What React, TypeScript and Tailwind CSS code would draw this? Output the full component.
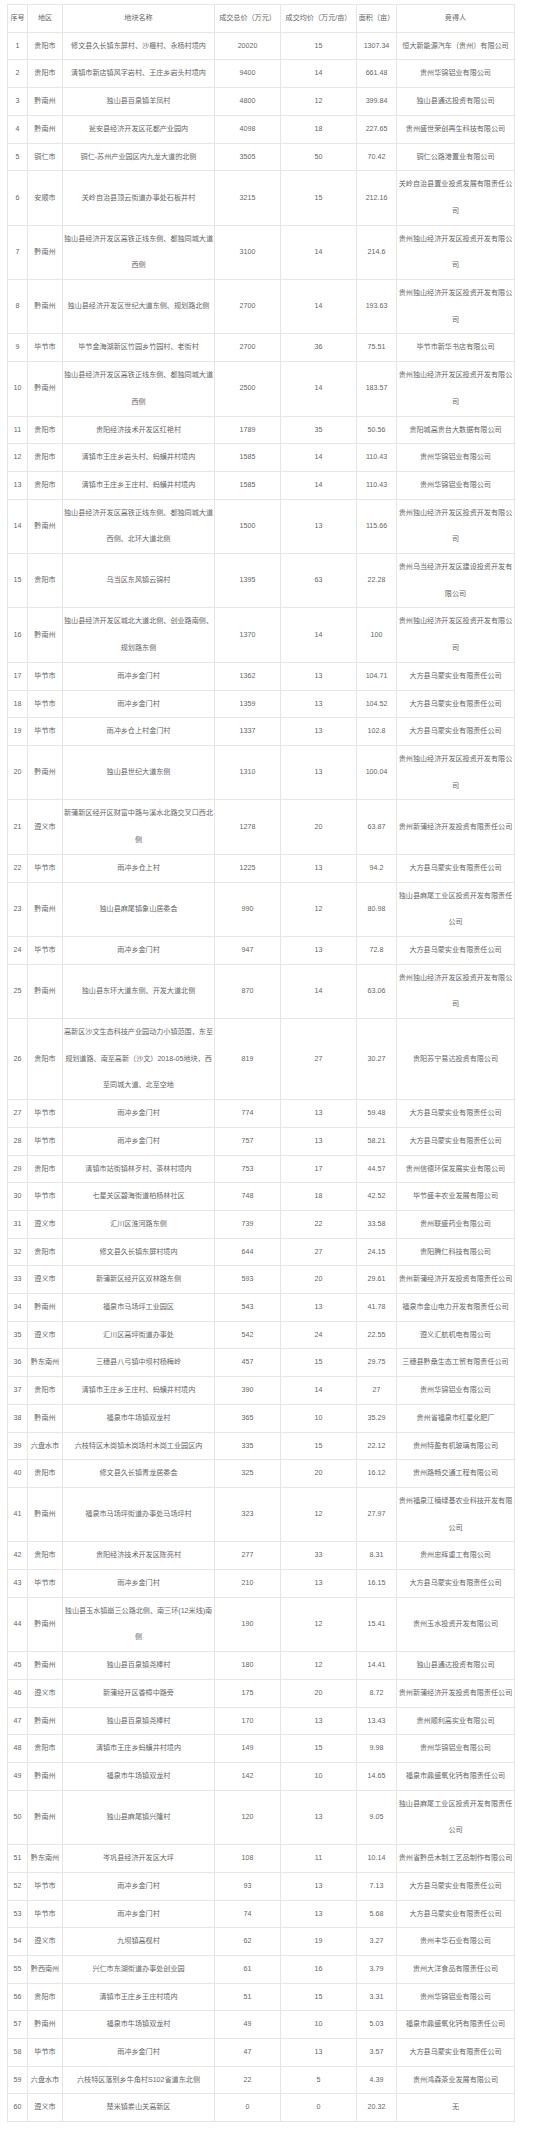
type Row = [number, string, string, number, number, number | string, string];

const headers = ["序号", "地区", "地块名称", "成交总价（万元）", "成交均价（万元/亩）", "面积（亩）", "竞得人"];

const rows: Row[] = [
  [1, "贵阳市", "修文县久长镇东屏村、沙榧村、永杨村境内", 20020, 15, "1307.34", "恒大新能源汽车（贵州）有限公司"],
  [2, "贵阳市", "清镇市新店镇风字岩村、王庄乡岩头村境内", 9400, 14, "661.48", "贵州华锦铝业有限公司"],
  [3, "黔南州", "独山县百泉镇羊凤村", 4800, 12, "399.84", "独山县通达投资有限公司"],
  [4, "黔南州", "瓮安县经济开发区花都产业园内", 4098, 18, "227.65", "贵州盛世荣创再生科技有限公司"],
  [5, "铜仁市", "铜仁-苏州产业园区内九龙大道的北侧", 3505, 50, "70.42", "铜仁公路港置业有限公司"],
  [6, "安顺市", "关岭自治县顶云街道办事处石板井村", 3215, 15, "212.16", "关岭自治县置业投资发展有限责任公司"],
  [7, "黔南州", "独山县经济开发区高铁正线东侧、都独同城大道西侧", 3100, 14, "214.6", "贵州独山经济开发区投资开发有限公司"],
  [8, "黔南州", "独山县经济开发区世纪大道东侧、规划路北侧", 2700, 14, "193.63", "贵州独山经济开发区投资开发有限公司"],
  [9, "毕节市", "毕节金海湖新区竹园乡竹园村、老街村", 2700, 36, "75.51", "毕节市新华书店有限公司"],
  [10, "黔南州", "独山县经济开发区高铁正线东侧、都独同城大道西侧", 2500, 14, "183.57", "贵州独山经济开发区投资开发有限公司"],
  [11, "贵阳市", "贵阳经济技术开发区红艳村", 1789, 35, "50.56", "贵阳城高贵台大数据有限公司"],
  [12, "贵阳市", "清镇市王庄乡岩头村、蚂蟥井村境内", 1585, 14, "110.43", "贵州华锦铝业有限公司"],
  [13, "贵阳市", "清镇市王庄乡王庄村、蚂蟥井村境内", 1585, 14, "110.43", "贵州华锦铝业有限公司"],
  [14, "黔南州", "独山县经济开发区高铁正线东侧、都独同城大道西侧、北环大道北侧", 1500, 13, "115.66", "贵州独山经济开发区投资开发有限公司"],
  [15, "贵阳市", "乌当区东风镇云锦村", 1395, 63, "22.28", "贵州乌当经济开发区建设投资开发有限公司"],
  [16, "黔南州", "独山县经济开发区城北大道北侧、创业路南侧、规划路东侧", 1370, 14, "100", "贵州独山经济开发区投资开发有限公司"],
  [17, "毕节市", "雨冲乡金门村", 1362, 13, "104.71", "大方县乌蒙实业有限责任公司"],
  [18, "毕节市", "雨冲乡金门村", 1359, 13, "104.52", "大方县乌蒙实业有限责任公司"],
  [19, "毕节市", "雨冲乡仓上村金门村", 1337, 13, "102.8", "大方县乌蒙实业有限责任公司"],
  [20, "黔南州", "独山县世纪大道东侧", 1310, 13, "100.04", "贵州独山经济开发区投资开发有限公司"],
  [21, "遵义市", "新蒲新区经开区财富中路与溪水北路交叉口西北侧", 1278, 20, "63.87", "贵州新蒲经济开发投资有限责任公司"],
  [22, "毕节市", "雨冲乡仓上村", 1225, 13, "94.2", "大方县乌蒙实业有限责任公司"],
  [23, "黔南州", "独山县麻尾镇象山居委会", 990, 12, "80.98", "独山县麻尾工业区投资开发有限责任公司"],
  [24, "毕节市", "雨冲乡金门村", 947, 13, "72.8", "大方县乌蒙实业有限责任公司"],
  [25, "黔南州", "独山县东环大道东侧、开发大道北侧", 870, 14, "63.06", "贵州独山经济开发区投资开发有限公司"],
  [26, "贵阳市", "高新区沙文生态科技产业园动力小镇范围，东至规划道路、南至高新（沙文）2018-05地块，西至同城大道、北至空地", 819, 27, "30.27", "贵阳苏宁易达投资有限公司"],
  [27, "毕节市", "雨冲乡金门村", 774, 13, "59.48", "大方县乌蒙实业有限责任公司"],
  [28, "毕节市", "雨冲乡金门村", 757, 13, "58.21", "大方县乌蒙实业有限责任公司"],
  [29, "贵阳市", "清镇市站街镇林歹村、茶林村境内", 753, 17, "44.57", "贵州信德环保发展实业有限公司"],
  [30, "毕节市", "七星关区碧海街道柏杨林社区", 748, 18, "42.52", "毕节盛丰农业发展有限公司"],
  [31, "遵义市", "汇川区淮河路东侧", 739, 22, "33.58", "贵州联盛药业有限公司"],
  [32, "贵阳市", "修文县久长镇东屏村境内", 644, 27, "24.15", "贵阳腾仁科技有限公司"],
  [33, "遵义市", "新蒲新区经开区双林路东侧", 593, 20, "29.61", "贵州新蒲经济开发投资有限责任公司"],
  [34, "黔南州", "福泉市马场坪工业园区", 543, 13, "41.78", "福泉市金山电力开发有限责任公司"],
  [35, "遵义市", "汇川区高坪街道办事处", 542, 24, "22.55", "遵义汇航机电有限公司"],
  [36, "黔东南州", "三穗县八弓镇中坝村杨梅岭", 457, 15, "29.75", "三穗县黔桑生态工贸有限责任公司"],
  [37, "贵阳市", "清镇市王庄乡王庄村、蚂蟥井村境内", 390, 14, "27", "贵州华锦铝业有限公司"],
  [38, "黔南州", "福泉市牛场镇双龙村", 365, 10, "35.29", "贵州省福泉市红星化肥厂"],
  [39, "六盘水市", "六枝特区木岗镇木岗场村木岗工业园区内", 335, 15, "22.12", "贵州特盈有机玻璃有限公司"],
  [40, "贵阳市", "修文县久长镇青龙居委会", 325, 20, "16.12", "贵州路畅交通工程有限公司"],
  [41, "黔南州", "福泉市马场坪街道办事处马场坪村", 323, 12, "27.97", "贵州福泉江楠绿基农业科技开发有限公司"],
  [42, "贵阳市", "贵阳经济技术开发区陈亮村", 277, 33, "8.31", "贵州忠辉重工有限公司"],
  [43, "毕节市", "雨冲乡金门村", 210, 13, "16.15", "大方县乌蒙实业有限责任公司"],
  [44, "黔南州", "独山县玉水镇崩三公路北侧、南三环(12米线)南侧", 190, 12, "15.41", "贵州玉水投资开发有限公司"],
  [45, "黔南州", "独山县百泉镇尧棒村", 180, 12, "14.41", "独山县通达投资有限公司"],
  [46, "遵义市", "新蒲经开区香樟中路旁", 175, 20, "8.72", "贵州新蒲经济开发投资有限责任公司"],
  [47, "黔南州", "独山县百泉镇尧棒村", 170, 13, "13.43", "贵州顺利高实业有限公司"],
  [48, "贵阳市", "清镇市王庄乡蚂蟥井村境内", 149, 15, "9.98", "贵州华锦铝业有限公司"],
  [49, "黔南州", "福泉市牛场镇双龙村", 142, 10, "14.65", "福泉市鼎盛氧化钙有限责任公司"],
  [50, "黔南州", "独山县麻尾镇兴隆村", 120, 13, "9.05", "独山县麻尾工业区投资开发有限责任公司"],
  [51, "黔东南州", "岑巩县经济开发区大坪", 108, 11, "10.14", "贵州省黔岳木制工艺品制作有限公司"],
  [52, "毕节市", "雨冲乡金门村", 93, 13, "7.13", "大方县乌蒙实业有限责任公司"],
  [53, "毕节市", "雨冲乡金门村", 74, 13, "5.68", "大方县乌蒙实业有限责任公司"],
  [54, "遵义市", "九坝镇高枧村", 62, 19, "3.27", "贵州丰华石业有限公司"],
  [55, "黔西南州", "兴仁市东湖街道办事处创业园", 61, 16, "3.79", "贵州大洋食品有限责任公司"],
  [56, "贵阳市", "清镇市王庄乡王庄村境内", 51, 15, "3.31", "贵州华锦铝业有限公司"],
  [57, "黔南州", "福泉市牛场镇双龙村", 49, 10, "5.03", "福泉市鼎盛氧化钙有限责任公司"],
  [58, "毕节市", "雨冲乡金门村", 47, 13, "3.57", "大方县乌蒙实业有限责任公司"],
  [59, "六盘水市", "六枝特区落别乡牛角村S102省道东北侧", 22, 5, "4.39", "贵州鸿森茶业发展有限公司"],
  [60, "遵义市", "楚米镇娄山关高新区", 0, 0, "20.32", "无"],
];

const cell = "border border-[#e6e6e6] p-0 text-center align-middle leading-[26.7px] break-all";

export default function App() {
  return (
    <div className="min-h-screen bg-white pl-[7px] pt-[4px]">
      <table
        className="w-[507px] table-fixed border-collapse text-[7.1px] text-[#666666]"
        style={{ fontFamily: '"Liberation Sans", "Noto Sans CJK SC", sans-serif' }}
      >
        <colgroup>
          <col className="w-[20px]" />
          <col className="w-[35px]" />
          <col className="w-[152px]" />
          <col className="w-[66px]" />
          <col className="w-[76px]" />
          <col className="w-[40px]" />
          <col className="w-[118px]" />
        </colgroup>
        <thead>
          <tr>
            {headers.map((h) => (
              <th key={h} className={`${cell} font-normal`}>
                {h}
              </th>
            ))}
          </tr>
        </thead>
        <tbody>
          {rows.map((r) => (
            <tr key={r[0]}>
              {r.map((v, i) => (
                <td key={i} className={cell}>
                  {v}
                </td>
              ))}
            </tr>
          ))}
        </tbody>
      </table>
    </div>
  );
}
